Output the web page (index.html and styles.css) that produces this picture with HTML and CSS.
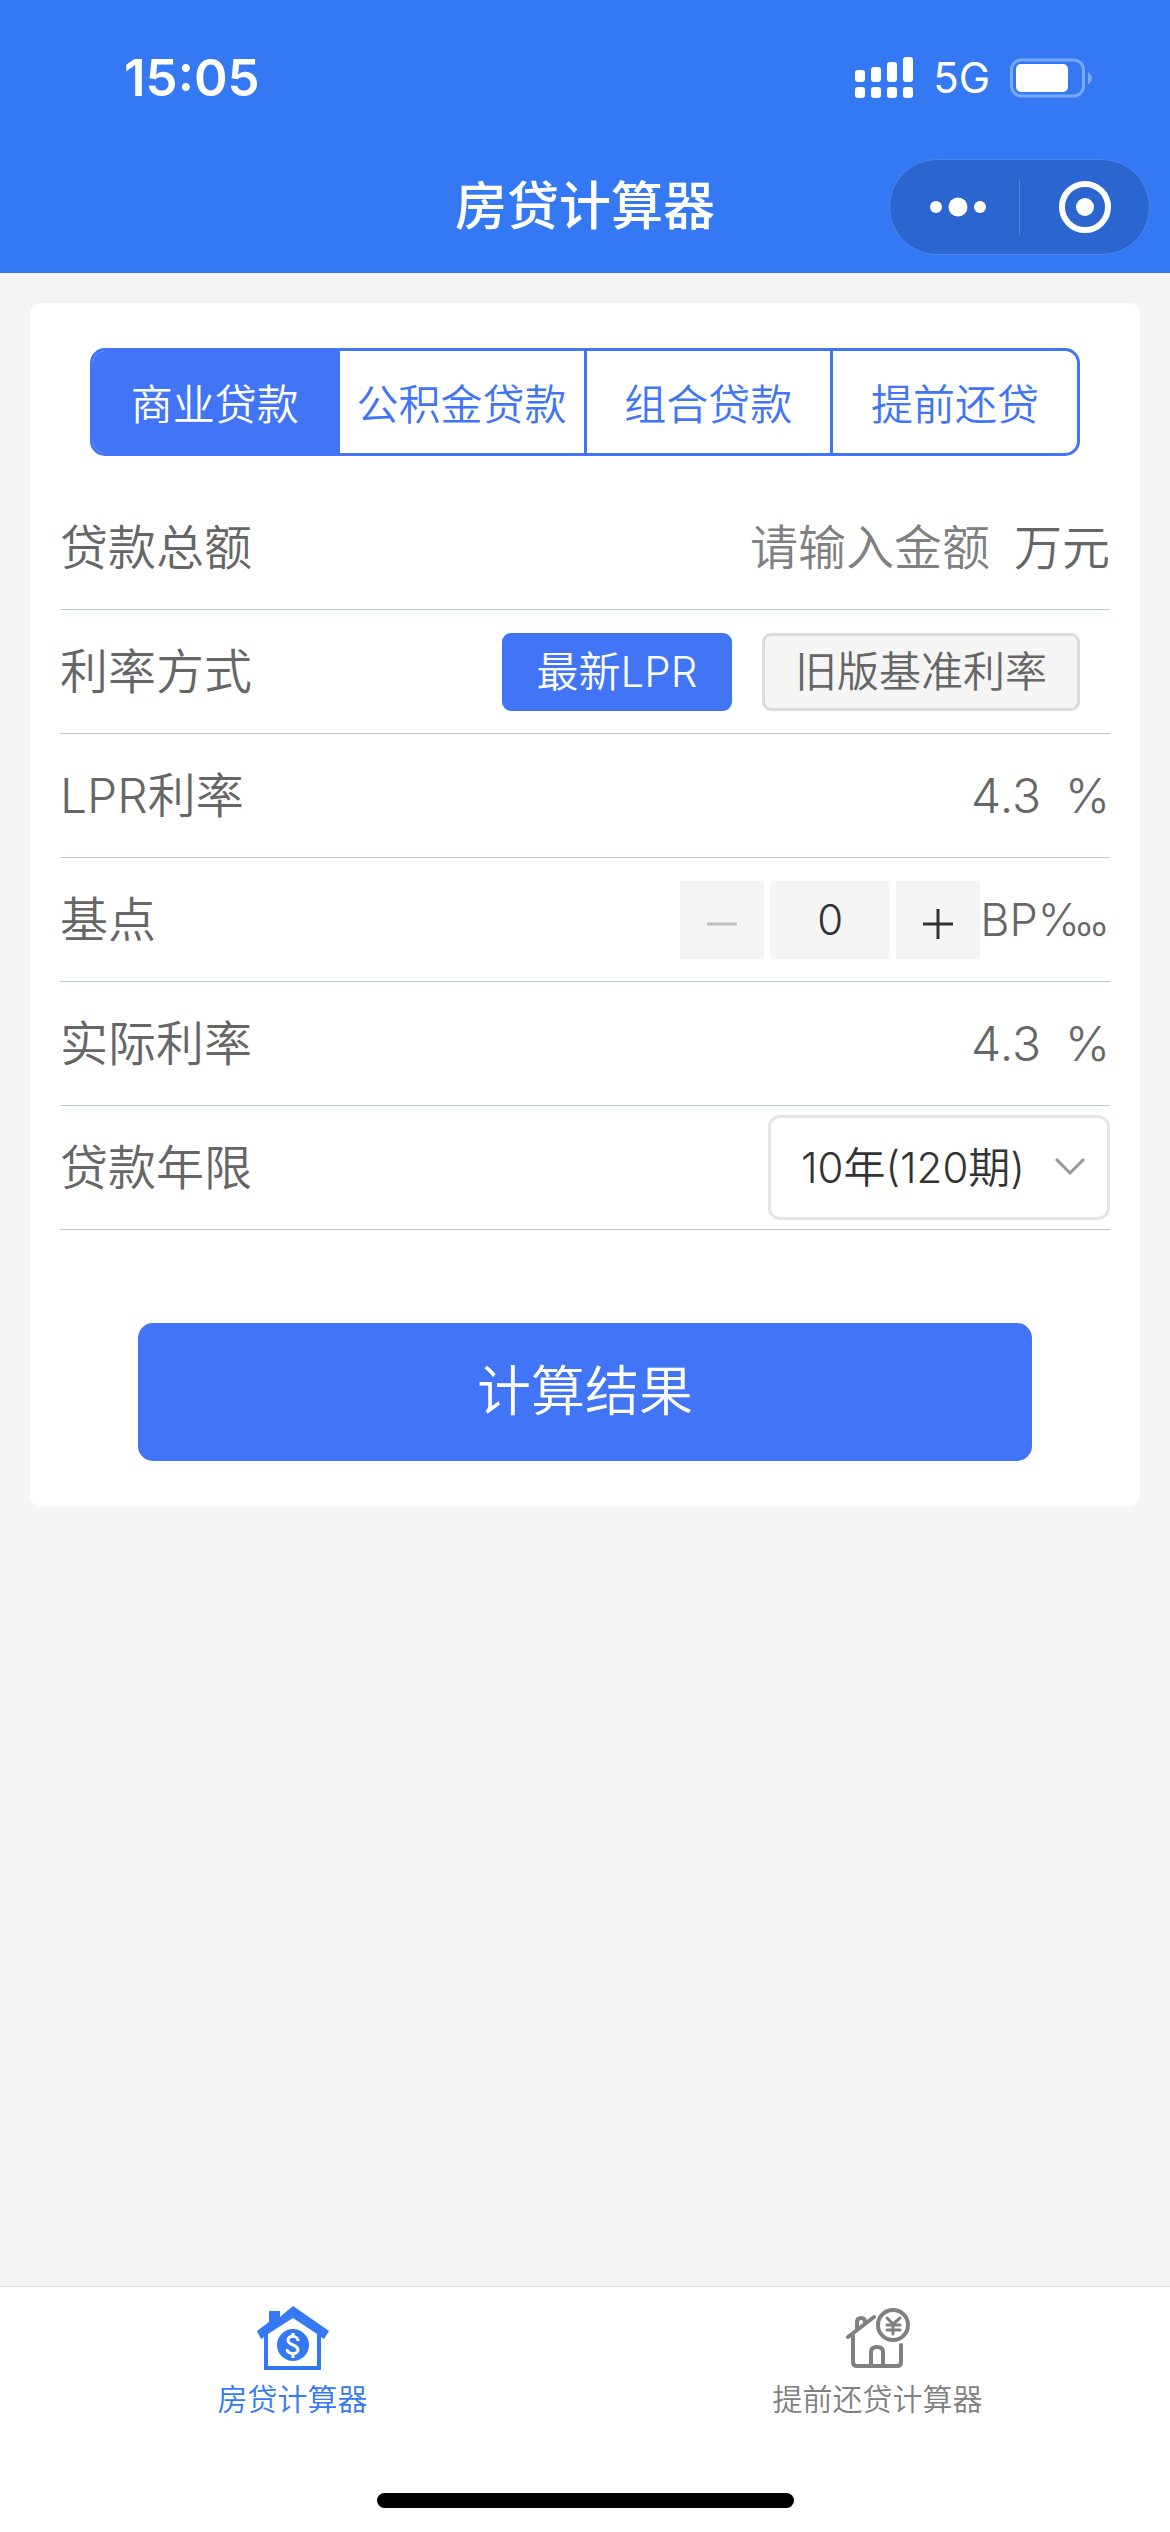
FILE: index.html
```html
<!DOCTYPE html>
<html lang="zh-CN">
<head>
<meta charset="utf-8">
<meta name="viewport" content="width=device-width, initial-scale=1">
<title>房贷计算器</title>
<link rel="stylesheet" href="styles.css">
</head>
<body>
<header class="header">
  <div class="status">
    <time class="status-time">15:05</time>
    <div class="status-icons">
      <svg class="signal" viewBox="0 0 58 42" aria-hidden="true">
        <g fill="#fff">
          <rect x="0" y="13" width="10" height="12" rx="3"/>
          <rect x="16" y="10" width="10" height="15" rx="3"/>
          <rect x="32" y="5" width="10" height="20" rx="3"/>
          <rect x="48" y="0" width="10" height="25" rx="3"/>
          <rect x="0" y="30" width="10" height="11" rx="3"/>
          <rect x="16" y="30" width="10" height="11" rx="3"/>
          <rect x="32" y="30" width="10" height="11" rx="3"/>
          <rect x="48" y="30" width="10" height="11" rx="3"/>
        </g>
      </svg>
      <span class="network">5G</span>
      <svg class="battery" viewBox="0 0 82 40" aria-hidden="true">
        <rect x="1.500" y="2" width="72" height="36" rx="10" fill="none" stroke="#78a8f9" stroke-width="3"/>
        <rect x="6" y="6" width="52" height="28" rx="5" fill="#fff"/>
        <path d="M78 14q4 2 4 6t-4 6z" fill="#78a8f9"/>
      </svg>
    </div>
  </div>
  <div class="navbar">
    <h1 class="title">房贷计算器</h1>
    <div class="capsule">
      <button class="capsule-btn capsule-more" type="button" aria-label="更多">
        <svg width="56" height="24" viewBox="0 0 56 24"><g fill="#fff"><circle cx="6" cy="12" r="6"/><circle cx="28" cy="12" r="9.500"/><circle cx="50" cy="12" r="6"/></g></svg>
      </button>
      <span class="capsule-line"></span>
      <button class="capsule-btn" type="button" aria-label="关闭">
        <svg width="54" height="54" viewBox="0 0 54 54"><circle cx="27" cy="27" r="23" fill="none" stroke="#fff" stroke-width="6"/><circle cx="27" cy="27" r="9" fill="#fff"/></svg>
      </button>
    </div>
  </div>
</header>

<main class="content">
  <form class="card">
    <div class="tabs" role="tablist">
      <button class="tab tab-active" type="button" role="tab" aria-selected="true">商业贷款</button>
      <button class="tab" type="button" role="tab">公积金贷款</button>
      <button class="tab" type="button" role="tab">组合贷款</button>
      <button class="tab" type="button" role="tab">提前还贷</button>
    </div>

    <div class="row">
      <label for="amount">贷款总额</label>
      <input class="amount" id="amount" type="text" inputmode="decimal" placeholder="请输入金额">
      <span class="unit">万元</span>
    </div>
    <div class="row row-options">
      <span class="label">利率方式</span>
      <button class="option option-active" type="button">最新LPR</button>
      <button class="option" type="button">旧版基准利率</button>
    </div>
    <div class="row">
      <label for="lpr">LPR利率</label>
      <output class="value" id="lpr">4.3</output>
      <span class="unit">%</span>
    </div>
    <div class="row">
      <label for="points">基点</label>
      <div class="stepper">
        <button class="step step-off" type="button" aria-label="减少" disabled>
          <svg width="32" height="32" viewBox="0 0 32 32"><path d="M1 16h30" stroke="currentColor" stroke-width="3"/></svg>
        </button>
        <input class="points" id="points" type="text" inputmode="numeric" value="0">
        <button class="step" type="button" aria-label="增加">
          <svg width="32" height="32" viewBox="0 0 32 32"><path d="M1 16h30M16 1v30" stroke="currentColor" stroke-width="3"/></svg>
        </button>
      </div>
      <span class="bp">BP‱</span>
    </div>
    <div class="row">
      <label for="real">实际利率</label>
      <output class="value" id="real">4.3</output>
      <span class="unit">%</span>
    </div>
    <div class="row">
      <label for="years">贷款年限</label>
      <div class="picker">
        <select class="years" id="years">
          <option>10年(120期)</option>
        </select>
        <svg class="chevron" width="32" height="20" viewBox="0 0 32 20" aria-hidden="true"><path d="M2 2l14 14L30 2" fill="none" stroke="#969799" stroke-width="3"/></svg>
      </div>
    </div>

    <button class="submit" type="button">计算结果</button>
  </form>
</main>

<nav class="tabbar">
  <div class="tabbar-items">
    <a class="tabbar-item tabbar-active" href="#calculator">
      <svg width="72" height="64" viewBox="0 0 72 64" aria-hidden="true">
        <path d="M12 5h11v6L36 0l36 25-5 8-3-2v33H7V31l-3 2-4-8 12-9zM11 28v32h49V28L36 12z" fill="currentColor" fill-rule="evenodd"/>
        <circle cx="36" cy="39" r="16" fill="currentColor"/>
        <path d="M41 35c0-6-10-6-10-1 0 6 10 4 10 10 0 5-11 5-11-1M36 27v5M36 47v5" fill="none" stroke="#fff" stroke-width="3"/>
      </svg>
      <span>房贷计算器</span>
    </a>
    <a class="tabbar-item" href="#prepay">
      <svg width="64" height="64" viewBox="0 0 64 64" aria-hidden="true">
        <g fill="none" stroke="currentColor" stroke-width="4" stroke-linecap="round" stroke-linejoin="round">
          <path d="M2 31L28 11M11 24V16q0-4 4-4t4 4v2"/>
          <path d="M7 30v26q0 4 4 4h40q4 0 4-4V39"/>
          <path d="M25 59V46q0-5 6-5t6 5v13"/>
          <circle cx="47" cy="19" r="15"/>
          <path d="M41 12l6 6 7-6M47 18v10M41 19h13M41 24h13" stroke-width="3"/>
        </g>
      </svg>
      <span>提前还贷计算器</span>
    </a>
  </div>
  <div class="home-indicator"></div>
</nav>
</body>
</html>
```
FILE: styles.css
```css
* {
  box-sizing: border-box;
}

body {
  margin: 0;
  min-height: 100vh;
  display: flex;
  flex-direction: column;
  background: #f5f5f5;
  color: #666;
  font-family: Inter, "Noto Sans CJK SC", sans-serif;
  font-size: 48px;
  font-weight: 350;
  line-height: 72px;
}

button,
input,
select {
  margin: 0;
  padding: 0;
  border: 0;
  border-radius: 0;
  background: none;
  color: inherit;
  font: inherit;
  appearance: none;
}

button {
  display: flex;
  align-items: center;
  justify-content: center;
}

svg {
  display: block;
  flex: none;
}

/* Header */

.header {
  background: #3478f4;
  color: #fff;
}

.status {
  display: flex;
  align-items: center;
  justify-content: space-between;
  height: 141px;
  padding: 15px 78px 0 124px;
}

.status-time {
  font-size: 51px;
  font-weight: 600;
}

.status-icons {
  display: flex;
  align-items: center;
  gap: 20px;
}

.signal {
  width: 58px;
  height: 42px;
}

.network {
  font-size: 42px;
  font-weight: 400;
}

.battery {
  width: 82px;
  height: 40px;
}

.navbar {
  display: grid;
  grid-template-columns: 1fr auto 1fr;
  align-items: center;
  height: 132px;
  padding: 0 20px;
}

.title {
  grid-column: 2;
  margin: 0;
  font-size: 52px;
  font-weight: 500;
}

.capsule {
  justify-self: end;
  display: flex;
  align-items: center;
  width: 261px;
  height: 96px;
  border: 1px solid #4a85ee;
  border-radius: 48px;
  background: #2b66d0;
}

.capsule-btn {
  flex: 1 1 50%;
  height: 100%;
}

.capsule-more {
  padding-left: 6px;
}

.capsule-line {
  flex: none;
  width: 1px;
  height: 56px;
  background: #5585da;
}

/* Calculator card */

.content {
  flex: 1;
  padding: 30px;
}

.card {
  padding: 45px 30px;
  border-radius: 10px;
  background: #fff;
}

.tabs {
  display: flex;
  height: 108px;
  margin: 0 30px 30px;
  border: 3px solid #4175f5;
  border-radius: 15px;
  overflow: hidden;
  color: #4175f5;
  font-family: "Noto Sans CJK SC", sans-serif;
  font-size: 42px;
}

.tab {
  flex: 1;
}

.tab + .tab {
  border-left: 3px solid #4175f5;
}

.tab-active {
  background: #4175f5;
  color: #fff;
}

.row {
  display: flex;
  align-items: center;
  height: 124px;
  border-bottom: 1px solid #b8cdd3;
}

.row > :first-child {
  margin-right: auto;
}

.unit {
  margin-left: 24px;
}

.amount {
  width: 240px;
  text-align: right;
}

.amount::placeholder {
  color: #808080;
  opacity: 1;
}

.row-options {
  gap: 30px;
  padding-right: 30px;
}

.option {
  min-width: 230px;
  height: 78px;
  padding: 0 30px;
  border: 3px solid #dcdce0;
  border-radius: 9px;
  background: #f5f5f5;
  font-size: 42px;
}

.option-active {
  border-color: #4175f5;
  background: #4175f5;
  color: #fff;
}

.stepper {
  display: flex;
  gap: 6px;
  color: #323233;
}

.step {
  width: 84px;
  height: 78px;
  padding-top: 9px;
  background: #f5f5f5;
}

.step-off {
  color: #c0c0c2;
}

.points {
  width: 120px;
  height: 78px;
  background: #f5f5f5;
  font-size: 42px;
  text-align: center;
}

.bp {
  font-size: 45px;
}

.picker {
  position: relative;
  width: 342px;
}

.years {
  display: block;
  width: 100%;
  height: 105px;
  padding: 0 30px;
  border: 3px solid #e4e5e4;
  border-radius: 12px;
  background: #fff;
  color: #333;
  font-size: 42px;
}

.chevron {
  position: absolute;
  top: 42px;
  right: 24px;
  pointer-events: none;
}

.submit {
  width: calc(100% - 156px);
  height: 138px;
  margin: 93px auto 0;
  border-radius: 15px;
  background: #4175f5;
  color: #fff;
  font-size: 54px;
}

/* Bottom tab bar */

.tabbar {
  border-top: 1px solid #dedede;
  background: #fff;
}

.tabbar-items {
  display: flex;
}

.tabbar-item {
  flex: 1;
  display: flex;
  flex-direction: column;
  align-items: center;
  gap: 6px;
  padding-top: 19px;
  color: #808080;
  font-size: 30px;
  line-height: 46px;
  text-decoration: none;
}

.tabbar-active {
  color: #3478f4;
}

.home-indicator {
  width: 417px;
  height: 15px;
  margin: 71px auto 24px;
  border-radius: 8px;
  background: #000;
}
```
